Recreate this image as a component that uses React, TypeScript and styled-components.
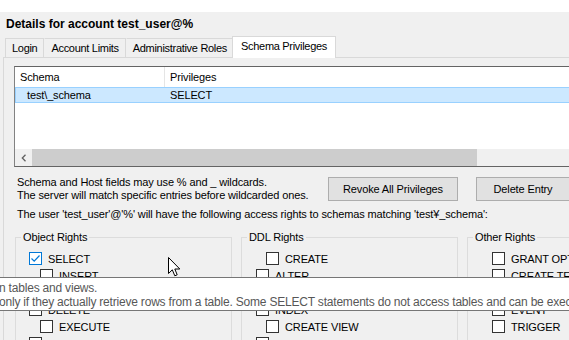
import React from 'react'
import styled, { createGlobalStyle } from 'styled-components'

const GlobalStyle = createGlobalStyle`
  html, body {
    margin: 0;
    padding: 0;
    background: #f0f0f0;
    overflow: hidden;
  }
  body {
    font-family: 'Liberation Sans', Arial, sans-serif;
    font-size: 11px;
    letter-spacing: -0.13px;
    color: #000;
  }
`

interface Right {
  label: string
  indent: number
  checked?: boolean
}

const objectRights: Right[] = [
  { label: 'SELECT', indent: 14, checked: true },
  { label: 'INSERT', indent: 25 },
  { label: 'UPDATE', indent: 14 },
  { label: 'DELETE', indent: 14 },
  { label: 'EXECUTE', indent: 25 },
  { label: 'SHOW VIEW', indent: 14 }
]

const ddlRights: Right[] = [
  { label: 'CREATE', indent: 25 },
  { label: 'ALTER', indent: 15 },
  { label: 'REFERENCES', indent: 15 },
  { label: 'INDEX', indent: 15 },
  { label: 'CREATE VIEW', indent: 25 },
  { label: 'CREATE ROUTINE', indent: 15 }
]

const otherRights: Right[] = [
  { label: 'GRANT OPTION', indent: 25 },
  { label: 'CREATE TEMPORARY TABLES', indent: 25 },
  { label: 'LOCK TABLES', indent: 25 },
  { label: 'EVENT', indent: 25 },
  { label: 'TRIGGER', indent: 25 }
]

const tabs = ['Login', 'Account Limits', 'Administrative Roles', 'Schema Privileges']

const CheckMark = () => (
  <svg width='11' height='11' viewBox='0 0 11 11'>
    <path d='M1.5 5.5 L4.2 8.2 L9.5 2.5' fill='none' stroke='#0078d7' strokeWidth='1.2' />
  </svg>
)

const Cursor = () => (
  <svg width='13' height='20' viewBox='0 0 13 20'>
    <path
      d='M0.5 0.5 L0.5 16.5 L4.3 12.8 L6.8 18.8 L9.2 17.8 L6.8 12 L11.8 12 Z'
      fill='#fff'
      stroke='#000'
      strokeWidth='1'
    />
  </svg>
)

const RightsBox: React.FC<{ title: string; items: Right[] }> = ({ title, items }) => (
  <GroupBox>
    <Legend>{title}</Legend>
    {items.map(item => (
      <CheckRow key={item.label} indent={item.indent}>
        <Box checked={item.checked}>{item.checked && <CheckMark />}</Box>
        <span>{item.label}</span>
      </CheckRow>
    ))}
  </GroupBox>
)

export default function App() {
  return (
    <>
      <GlobalStyle />
      <Window>
        <TopStrip />
        <Title>Details for account test_user@%</Title>
        <TabBar>
          {tabs.map((t, i) => (
            <Tab key={t} active={i === tabs.length - 1}>
              {t}
            </Tab>
          ))}
        </TabBar>
        <Panel>
          <ListBox>
            <HeaderRow>
              <HeaderCell width={150}>Schema</HeaderCell>
              <HeaderCell>Privileges</HeaderCell>
            </HeaderRow>
            <SelectedRow>
              <Cell width={150} pad={11}>test\_schema</Cell>
              <Cell pad={4}>SELECT</Cell>
            </SelectedRow>
            <ListSpace />
            <HScroll>
              <ScrollButton>
                <svg width='8' height='8' viewBox='0 0 8 8'>
                  <path d='M5.5 0.8 L2.3 4 L5.5 7.2' fill='none' stroke='#606060' strokeWidth='1.3' />
                </svg>
              </ScrollButton>
              <Thumb />
            </HScroll>
          </ListBox>

          <InfoRow>
            <InfoText>
              Schema and Host fields may use % and _ wildcards.
              <br />
              The server will match specific entries before wildcarded ones.
            </InfoText>
            <Button width={130}>Revoke All Privileges</Button>
            <Button width={94}>Delete Entry</Button>
          </InfoRow>

          <AccessText>
            The user 'test_user'@'%' will have the following access rights to schemas matching
            'test¥_schema':
          </AccessText>

          <Groups>
            <RightsBox title='Object Rights' items={objectRights} />
            <RightsBox title='DDL Rights' items={ddlRights} />
            <RightsBox title='Other Rights' items={otherRights} />
          </Groups>
        </Panel>

        <Tooltip>
          <div>n tables and views.</div>
          <div>
            only if they actually retrieve rows from a table. Some SELECT statements do not access
            tables and can be executed without permission for any database.
          </div>
        </Tooltip>
        <CursorSpot>
          <Cursor />
        </CursorSpot>
      </Window>
    </>
  )
}

const Window = styled.div`
  position: relative;
  width: 569px;
  height: 340px;
  overflow: hidden;
  background: #f0f0f0;
`

const TopStrip = styled.div`
  height: 12px;
  background: #fff;
`

const Title = styled.div`
  height: 25px;
  line-height: 24px;
  padding-left: 6px;
  font-size: 12px;
  font-weight: bold;
  letter-spacing: 0;
`

const TabBar = styled.div`
  display: flex;
  align-items: flex-end;
  height: 20px;
  padding-left: 5px;
`

const Tab = styled.div<{ active?: boolean }>`
  height: ${p => (p.active ? 21 : 18)}px;
  line-height: ${p => (p.active ? 19 : 18)}px;
  padding: 0 ${p => (p.active ? 8 : 6)}px;
  margin-left: ${p => (p.active ? -2 : 0)}px;
  margin-bottom: ${p => (p.active ? -1 : 0)}px;
  border: 1px solid #d9d9d9;
  border-bottom: none;
  border-left-color: ${p => (p.active ? '#d9d9d9' : 'transparent')};
  background: ${p => (p.active ? '#fff' : '#f0f0f0')};
  letter-spacing: -0.3px;
  position: relative;
  z-index: ${p => (p.active ? 1 : 0)};

  &:first-child {
    border-left-color: #d9d9d9;
  }
`

const Panel = styled.div`
  margin-left: 3px;
  width: 720px;
  height: 300px;
  border-left: 1px solid #d9d9d9;
  border-top: 1px solid #d9d9d9;
  padding: 8px 0 0 10px;
`

const ListBox = styled.div`
  width: 600px;
  height: 99px;
  border: 1px solid #828282;
  border-top-color: #646464;
  border-bottom-color: #646464;
  background: #fff;
  display: flex;
  flex-direction: column;
`

const HeaderRow = styled.div`
  display: flex;
  height: 20px;
  line-height: 20px;
`

const HeaderCell = styled.div<{ width?: number }>`
  box-sizing: border-box;
  width: ${p => (p.width ? `${p.width}px` : 'auto')};
  padding-left: 5px;
  border-right: ${p => (p.width ? '1px solid #e5e5e5' : 'none')};
`

const SelectedRow = styled.div`
  display: flex;
  height: 14px;
  line-height: 14px;
  background: #cce8ff;
  border: 1px solid #99d1ff;
  border-right: none;
`

const Cell = styled.div<{ width?: number; pad: number }>`
  box-sizing: border-box;
  width: ${p => (p.width ? `${p.width}px` : 'auto')};
  padding-left: ${p => p.pad}px;
`

const ListSpace = styled.div`
  flex: 1;
`

const HScroll = styled.div`
  display: flex;
  height: 17px;
  background: #f0f0f0;
`

const ScrollButton = styled.div`
  width: 17px;
  display: flex;
  align-items: center;
  justify-content: center;
`

const Thumb = styled.div`
  width: 445px;
  background: #cdcdcd;
`

const InfoRow = styled.div`
  display: flex;
  align-items: flex-start;
  margin-top: 9px;
  height: 26px;
`

const InfoText = styled.div`
  width: 311px;
  padding-left: 3px;
  line-height: 13px;
`

const Button = styled.div<{ width: number }>`
  width: ${p => p.width}px;
  height: 24px;
  margin-top: 1px;
  margin-right: 18px;
  box-sizing: border-box;
  border: 1px solid #adadad;
  background: #e1e1e1;
  display: flex;
  align-items: center;
  justify-content: center;
  flex-shrink: 0;
`

const AccessText = styled.div`
  padding-left: 3px;
  margin-top: 6px;
  line-height: 13px;
  white-space: nowrap;
`

const Groups = styled.div`
  display: flex;
  gap: 9px;
  margin-top: 10px;
  padding-left: 1px;
`

const GroupBox = styled.fieldset`
  width: 217px;
  flex-shrink: 0;
  box-sizing: border-box;
  height: 140px;
  margin: 0;
  padding: 6px 0 0 0;
  border: 1px solid #dcdcdc;
  min-width: 0;
`

const Legend = styled.legend`
  margin-left: 5px;
  padding: 0 2px;
  line-height: 13px;
`

const CheckRow = styled.div<{ indent: number }>`
  display: flex;
  align-items: center;
  height: 17px;
  padding-left: ${p => p.indent - 1}px;
  gap: 6px;
  white-space: nowrap;
`

const Box = styled.div<{ checked?: boolean }>`
  width: 13px;
  height: 13px;
  box-sizing: border-box;
  border: 1px solid ${p => (p.checked ? '#0078d7' : '#333')};
  background: #fff;
  display: flex;
  align-items: center;
  justify-content: center;
  flex-shrink: 0;
`

const Tooltip = styled.div`
  position: absolute;
  left: -2px;
  top: 277px;
  width: 640px;
  height: 34px;
  box-sizing: border-box;
  border: 1px solid #767676;
  background: #fff;
  color: #575757;
  font-size: 12px;
  letter-spacing: -0.2px;
  line-height: 14px;
  padding: 3px 0 0 0;
  white-space: nowrap;
`

const CursorSpot = styled.div`
  position: absolute;
  left: 168px;
  top: 257px;
  line-height: 0;
`
